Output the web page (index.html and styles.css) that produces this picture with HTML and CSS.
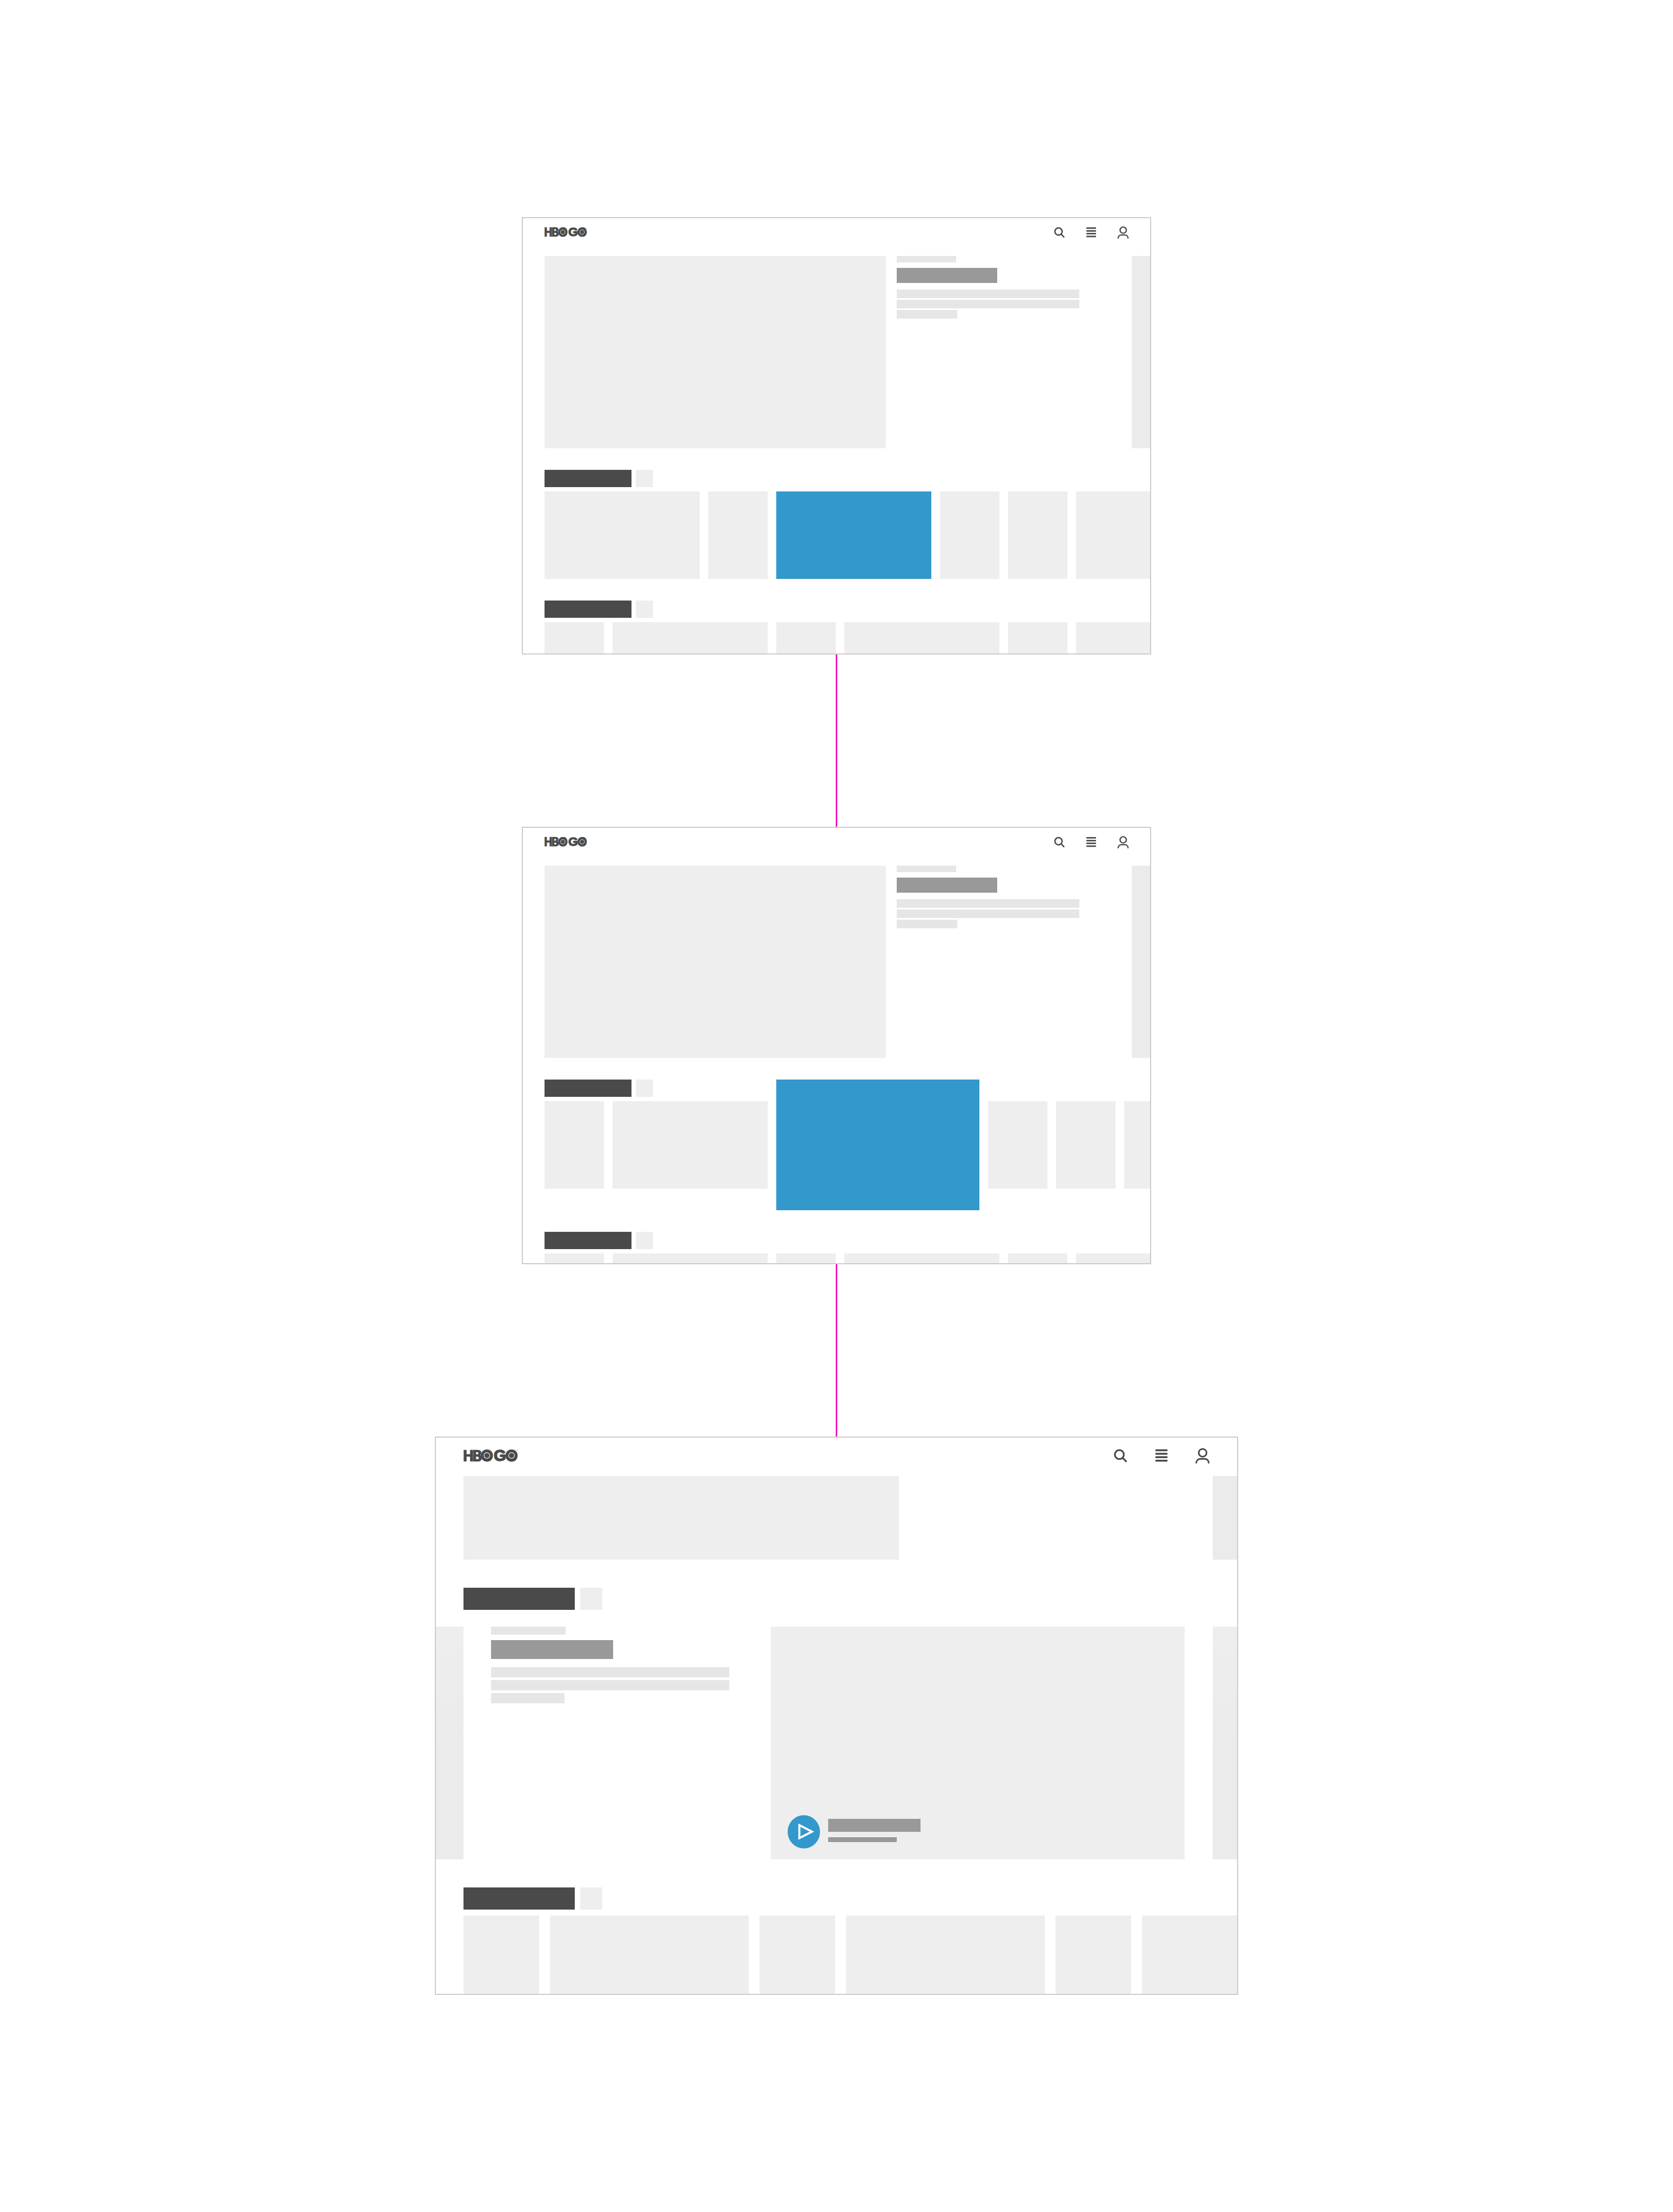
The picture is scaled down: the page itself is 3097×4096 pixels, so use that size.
FILE: index.html
```html
<!DOCTYPE html>
<html lang="en">
<head>
<meta charset="utf-8">
<title>HBO GO wireframes</title>
<link rel="stylesheet" href="styles.css">
</head>
<body>
<svg class="sprite" aria-hidden="true">
  <symbol id="logo" viewBox="221 110 378 84" overflow="visible">
    <text class="logo-text" y="191" x="214 280 345">HBO</text>
    <text class="logo-text round" y="188" x="431">G</text>
    <text class="logo-text" y="191" x="516">O</text>
    <g fill="#4a4a4a">
      <circle cx="383" cy="152" r="42"/>
      <circle cx="554" cy="152" r="42"/>
      <circle cx="593" cy="115" r="3" opacity=".6"/>
    </g>
    <g fill="none" stroke="#fff" stroke-width="4">
      <circle cx="383" cy="152" r="20"/>
      <circle cx="554" cy="152" r="20"/>
    </g>
  </symbol>
  <symbol id="search" viewBox="0 0 112 112">
    <circle cx="49" cy="50" r="31" fill="none" stroke="currentColor" stroke-width="12"/>
    <path d="M73 74 95 97" stroke="currentColor" stroke-width="12" stroke-linecap="round"/>
  </symbol>
  <symbol id="menu" viewBox="0 0 112 112">
    <g fill="currentColor">
      <rect x="14" y="14" width="84" height="13" rx="4"/>
      <rect x="14" y="38" width="84" height="13" rx="4"/>
      <rect x="14" y="62" width="84" height="13" rx="4"/>
      <rect x="14" y="86" width="84" height="13" rx="4"/>
    </g>
  </symbol>
  <symbol id="user" viewBox="0 0 112 112">
    <g fill="none" stroke="currentColor" stroke-width="11">
      <circle cx="57" cy="38" r="27"/>
      <path d="M13 111V108C13 91 27 80 41 80H73C87 80 99 91 99 108V111"/>
    </g>
  </symbol>
</svg>

<main class="flow">
  <section class="screen" aria-label="Browse">
    <header class="bar">
      <a class="logo" href="#" aria-label="HBO GO"><svg viewBox="0 0 378 84"><use href="#logo"/></svg></a>
      <nav class="tools">
        <button aria-label="Search"><svg><use href="#search"/></svg></button>
        <button aria-label="Menu"><svg><use href="#menu"/></svg></button>
        <button aria-label="Account"><svg><use href="#user"/></svg></button>
      </nav>
    </header>
    <div class="hero">
      <div class="art"></div>
      <div class="copy"><i class="label"></i><i class="title"></i><i class="line"></i><i class="line"></i><i class="line short"></i></div>
      <div class="peek"></div>
    </div>
    <div class="heading"><i class="name"></i><i class="count"></i></div>
    <div class="tiles"><i class="wide"></i><i></i><i class="wide active"></i><i></i><i></i><i class="wide"></i></div>
    <div class="heading"><i class="name"></i><i class="count"></i></div>
    <div class="tiles cut"><i></i><i class="wide"></i><i></i><i class="wide"></i><i></i><i class="wide"></i></div>
  </section>

  <div class="connector"></div>

  <section class="screen" aria-label="Tile focused">
    <header class="bar">
      <a class="logo" href="#" aria-label="HBO GO"><svg viewBox="0 0 378 84"><use href="#logo"/></svg></a>
      <nav class="tools">
        <button aria-label="Search"><svg><use href="#search"/></svg></button>
        <button aria-label="Menu"><svg><use href="#menu"/></svg></button>
        <button aria-label="Account"><svg><use href="#user"/></svg></button>
      </nav>
    </header>
    <div class="hero">
      <div class="art"></div>
      <div class="copy"><i class="label"></i><i class="title"></i><i class="line"></i><i class="line"></i><i class="line short"></i></div>
      <div class="peek"></div>
    </div>
    <div class="heading"><i class="name"></i><i class="count"></i></div>
    <div class="tiles focused"><i></i><i class="wide"></i><i class="grown active"></i><i></i><i></i><i></i></div>
    <div class="heading"><i class="name"></i><i class="count"></i></div>
    <div class="tiles sliver"><i></i><i class="wide"></i><i></i><i class="wide"></i><i></i><i class="wide"></i></div>
  </section>

  <div class="connector"></div>

  <section class="screen large" aria-label="Tile expanded">
    <header class="bar">
      <a class="logo" href="#" aria-label="HBO GO"><svg viewBox="0 0 378 84"><use href="#logo"/></svg></a>
      <nav class="tools">
        <button aria-label="Search"><svg><use href="#search"/></svg></button>
        <button aria-label="Menu"><svg><use href="#menu"/></svg></button>
        <button aria-label="Account"><svg><use href="#user"/></svg></button>
      </nav>
    </header>
    <div class="hero">
      <div class="art"></div>
      <div class="peek"></div>
    </div>
    <div class="heading"><i class="name"></i><i class="count"></i></div>
    <div class="detail">
      <div class="peek"></div>
      <div class="copy"><i class="label"></i><i class="title"></i><i class="line"></i><i class="line"></i><i class="line short"></i></div>
      <div class="video">
        <button class="play" aria-label="Play">
          <svg viewBox="0 0 224 230">
            <ellipse cx="112" cy="115" rx="112" ry="115" fill="#3398cc"/>
            <path d="M81 69V159L169 114Z" fill="none" stroke="#fff" stroke-width="14"/>
          </svg>
        </button>
        <div class="caption"><i class="caption-title"></i><i class="caption-note"></i></div>
      </div>
      <div class="peek"></div>
    </div>
    <div class="heading"><i class="name"></i><i class="count"></i></div>
    <div class="tiles cut"><i></i><i class="wide"></i><i></i><i class="wide"></i><i></i><i class="wide"></i></div>
  </section>
</main>
</body>
</html>
```
FILE: styles.css
```css
* { box-sizing: border-box; }

body {
  margin: 0;
  background: #fff;
  font-family: "Liberation Sans", Arial, sans-serif;
}

i { display: block; }

button {
  padding: 0;
  border: 0;
  background: none;
  color: inherit;
}

svg { display: block; }

.sprite {
  position: absolute;
  width: 0;
  height: 0;
}

.flow {
  display: flex;
  flex-direction: column;
  align-items: center;
  padding: 402px 0;
}

.connector {
  width: 3px;
  height: 319px;
  background: #f41cb8;
}

/* Wireframe screen: sizes are shared through these properties */
.screen {
  --edge: 40px;
  --bar-top: 14px;
  --bar-bottom: 32px;
  --bar-end: 38px;
  --logo: 79px;
  --icon: 24px;
  --icon-gap: 35px;
  --art: 632px;
  --art-height: 356px;
  --peek: 34px;
  --head: 32px;
  --name: 161px;
  --head-gap: 8px;
  --row-gap: 8px;
  --section-gap: 40px;
  --tile: 110px;
  --wide: 287px;
  --tile-gap: 16px;
  --tile-height: 162px;
  --cut: 58px;
  --label: 110px;
  --label-height: 12px;
  --title: 186px;
  --title-height: 28px;
  --copy-gap: 10px;
  --copy-space: 12px;
  --line: 338px;
  --line-height: 16px;
  --line-gap: 3px;
  --short: 112px;
  width: 37.6%;
  overflow: hidden;
  border: 2px solid #ccc;
  background: #fff;
  color: #4a4a4a;
}

.large {
  --edge: 51px;
  --bar-top: 18px;
  --bar-bottom: 23px;
  --bar-end: 49px;
  --logo: 101px;
  --icon: 30px;
  --icon-gap: 46px;
  --art: 806px;
  --art-height: 155px;
  --peek: 45px;
  --head: 41px;
  --name: 206px;
  --head-gap: 10px;
  --row-gap: 11px;
  --section-gap: 52px;
  --tile: 140px;
  --wide: 368px;
  --tile-gap: 20px;
  --cut: 145px;
  --label: 138px;
  --label-height: 15px;
  --title: 226px;
  --title-height: 35px;
  --copy-space: 15px;
  --line: 441px;
  --line-height: 19px;
  --line-gap: 5px;
  --short: 136px;
  width: 48%;
}

.bar {
  display: flex;
  align-items: center;
  justify-content: space-between;
  padding: var(--bar-top) var(--bar-end) var(--bar-bottom) var(--edge);
}

.logo { width: var(--logo); }

.logo svg {
  width: 100%;
  overflow: visible;
}

.logo-text {
  fill: #4a4a4a;
  stroke: #4a4a4a;
  stroke-width: 2px;
  font-family: "DejaVu Sans Condensed", "DejaVu Sans", sans-serif;
  font-size: 106px;
  font-weight: 700;
}

.logo-text.round {
  stroke-width: 6px;
  font-family: "Liberation Sans", Arial, sans-serif;
  font-size: 110px;
}

.tools {
  display: flex;
  gap: var(--icon-gap);
}

.tools svg {
  width: var(--icon);
  height: var(--icon);
}

.hero {
  display: flex;
  height: var(--art-height);
  padding-left: var(--edge);
}

.art {
  flex: none;
  width: var(--art);
  background: #eee;
}

.hero .copy { margin-left: 20px; }

.peek {
  flex: none;
  width: var(--peek);
  margin-left: auto;
  background: #ebebeb;
}

.copy {
  display: flex;
  flex-direction: column;
  gap: var(--line-gap);
}

.label {
  width: var(--label);
  height: var(--label-height);
  background: #e6e6e6;
}

.title {
  width: var(--title);
  height: var(--title-height);
  margin-top: calc(var(--copy-gap) - var(--line-gap));
  margin-bottom: calc(var(--copy-space) - var(--line-gap));
  background: #999;
}

.line {
  width: var(--line);
  height: var(--line-height);
  background: #e6e6e6;
}

.short { width: var(--short); }

.heading {
  display: flex;
  gap: var(--head-gap);
  height: var(--head);
  margin-top: var(--section-gap);
  margin-bottom: var(--row-gap);
  padding-left: var(--edge);
}

.name {
  width: var(--name);
  background: #4a4a4a;
}

.count {
  width: var(--head);
  background: #eee;
}

.tiles {
  display: flex;
  align-items: center;
  gap: var(--tile-gap);
  padding-left: var(--edge);
}

.tiles i {
  flex: none;
  width: var(--tile);
  height: var(--tile-height);
  background: #eee;
}

.tiles .wide { width: var(--wide); }
.tiles .active { background: #3398cc; }

/* The focused tile grows over the heading row and pushes the next row down */
.tiles.focused { margin-top: -40px; }

.tiles .grown {
  width: 376px;
  height: 242px;
}

.tiles.cut i { height: var(--cut); }
.tiles.sliver i { height: 18px; }

.detail {
  display: flex;
  height: 431px;
  margin-top: 31px;
}

.detail .copy {
  flex: 1;
  margin-left: 51px;
}

.detail .peek {
  margin-left: 52px;
  background: linear-gradient(#eee, #ebebeb 50%);
}

.detail .peek:first-child {
  width: var(--edge);
  margin-left: 0;
}

.video {
  display: flex;
  flex: none;
  align-items: flex-end;
  gap: 15px;
  width: 766px;
  padding: 0 31px 20px;
  background: #eee;
}

.play svg {
  width: 60px;
  height: 62px;
}

.caption {
  display: flex;
  flex-direction: column;
  gap: 10px;
  padding-bottom: 12px;
}

.caption-title {
  width: 171px;
  height: 24px;
  background: #999;
}

.caption-note {
  width: 127px;
  height: 9px;
  background: #999;
}
```
